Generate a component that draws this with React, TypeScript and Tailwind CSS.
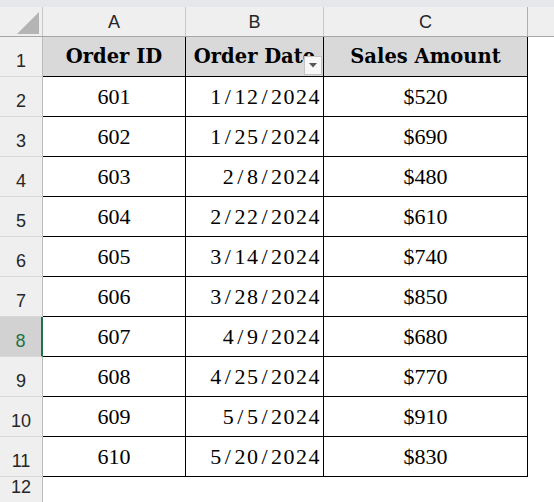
import React from 'react';

const rows = [
  { id: '601', date: '1/12/2024', amount: '$520' },
  { id: '602', date: '1/25/2024', amount: '$690' },
  { id: '603', date: '2/8/2024', amount: '$480' },
  { id: '604', date: '2/22/2024', amount: '$610' },
  { id: '605', date: '3/14/2024', amount: '$740' },
  { id: '606', date: '3/28/2024', amount: '$850' },
  { id: '607', date: '4/9/2024', amount: '$680' },
  { id: '608', date: '4/25/2024', amount: '$770' },
  { id: '609', date: '5/5/2024', amount: '$910' },
  { id: '610', date: '5/20/2024', amount: '$830' },
];

function DateText({ value }: { value: string }) {
  const parts = value.split('/');
  return (
    <span className="tracking-[1.5px]">
      {parts.map((p, i) => (
        <React.Fragment key={i}>
          {i > 0 && <span className="px-[2px]">/</span>}
          {p}
        </React.Fragment>
      ))}
    </span>
  );
}

function RowHeader({ n, selected, h = 'h-[40px]' }: { n: number; selected?: boolean; h?: string }) {
  return (
    <div
      className={`${h} w-[43px] shrink-0 flex items-end justify-center pb-[1px] text-[18px] font-normal border-b border-[#d6d6d6] font-['Liberation_Sans',sans-serif] ${
        selected
          ? 'bg-[#d2d2d2] text-[#217346] border-r-2 border-r-[#217346]'
          : 'bg-[#efefef] text-[#262626] border-r border-r-[#bcbcbc]'
      }`}
    >
      {n}
    </div>
  );
}

export default function App() {
  return (
    <div className="w-[554px] h-[502px] bg-white overflow-hidden">
      <div className="h-[7px] bg-[#e5e7ea]" />

      {/* column letters */}
      <div className="flex h-[30px] bg-[#efefef] border-b border-[#a6a6a6] text-[18px] text-[#262626] font-['Liberation_Sans',sans-serif]">
        <div className="w-[43px] shrink-0 border-r border-[#c8c8c8] flex items-end justify-end pr-[3px] pb-[2px]">
          <svg width="22" height="22" viewBox="0 0 22 22">
            <polygon points="22,0 22,22 0,22" fill="#b4b4b4" />
          </svg>
        </div>
        <div className="w-[143px] shrink-0 border-r border-[#c8c8c8] flex items-center justify-center pt-[2px]">A</div>
        <div className="w-[138px] shrink-0 border-r border-[#c8c8c8] flex items-center justify-center pt-[2px]">B</div>
        <div className="w-[204px] shrink-0 border-r border-[#b0b0b0] flex items-center justify-center pt-[2px]">C</div>
        <div className="flex-1" />
      </div>

      {/* header row */}
      <div className="flex font-['DejaVu_Serif',serif] font-bold text-[19.5px] text-black">
        <RowHeader n={1} />
        <div className="w-[143px] h-[40px] shrink-0 bg-[#d9d9d9] border-r border-b border-black flex items-center justify-center pt-[1px]">
          Order ID
        </div>
        <div className="relative w-[138px] h-[40px] shrink-0 bg-[#d9d9d9] border-r border-b border-black flex items-center justify-center pt-[1px] overflow-hidden whitespace-nowrap">
          Order Date
          <div className="absolute right-[1px] bottom-[1px] w-[18px] h-[19px] bg-[#f7f7f7] border border-[#c4c4c4] flex items-center justify-center">
            <svg width="8" height="5" viewBox="0 0 8 5">
              <polygon points="0,0 8,0 4,4.5" fill="#555" />
            </svg>
          </div>
        </div>
        <div className="w-[204px] h-[40px] shrink-0 bg-[#d9d9d9] border-r border-b border-black flex items-center justify-center pt-[1px]">
          Sales Amount
        </div>
        <div className="flex-1" />
      </div>

      {rows.map((r, i) => (
        <div key={r.id} className="flex text-[22px] text-black font-['Liberation_Serif',serif]">
          <RowHeader n={i + 2} selected={i + 2 === 8} />
          <div className="w-[143px] h-[40px] shrink-0 border-r border-b border-black flex items-center justify-center">
            {r.id}
          </div>
          <div className="w-[138px] h-[40px] shrink-0 border-r border-b border-black flex items-center justify-end pr-[2px]">
            <DateText value={r.date} />
          </div>
          <div className="w-[204px] h-[40px] shrink-0 border-r border-b border-black flex items-center justify-center">
            {r.amount}
          </div>
          <div className="flex-1" />
        </div>
      ))}

      <div className="flex">
        <RowHeader n={12} h="h-[26px]" />
        <div className="flex-1" />
      </div>
    </div>
  );
}
